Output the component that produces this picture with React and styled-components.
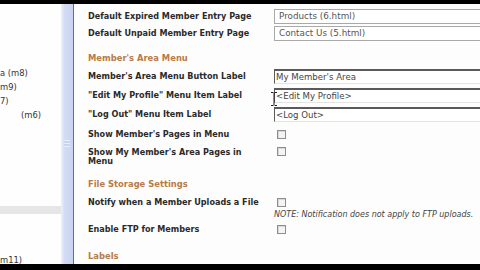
import styled, { createGlobalStyle } from 'styled-components';

const GlobalStyle = createGlobalStyle`
  html, body {
    margin: 0;
    padding: 0;
    background: #000;
    overflow: hidden;
  }
  body {
    font-family: "DejaVu Sans", Verdana, sans-serif;
  }
`;

const sideItems = [
  { text: 'a (m8)', top: 65, indent: 0 },
  { text: 'm9)', top: 6, indent: 0 },
  { text: '7)', top: 6, indent: 0 },
  { text: '(m6)', top: 6, indent: 21 },
];

const App = () => {
  return (
    <Screen>
      <GlobalStyle />
      <Window>
        <Sidebar>
          {sideItems.map((item) => (
            <SideItem key={item.text} $mt={item.top} $indent={item.indent}>
              {item.text}
            </SideItem>
          ))}
          <SideSelected />
          <SideItem $mt={42} $indent={0}>m11)</SideItem>
        </Sidebar>
        <Scrollbar>
          <Grip />
        </Scrollbar>
        <Main>
          <Row $h={17} $mt={4}>
            <Label>Default Expired Member Entry Page</Label>
            <Select>Products (6.html)</Select>
          </Row>
          <Row $h={17} $mt={0}>
            <Label>Default Unpaid Member Entry Page</Label>
            <Select>Contact Us (5.html)</Select>
          </Row>

          <Heading $mt={9}>Member's Area Menu</Heading>
          <Row $h={19} $mt={2}>
            <Label>Member's Area Menu Button Label</Label>
            <TextInput>My Member's Area</TextInput>
          </Row>
          <Row $h={19} $mt={0}>
            <Label>"Edit My Profile" Menu Item Label</Label>
            <TextInput>
              &lt;Edit My Profile&gt;
              <IBeam viewBox="0 0 6 14" width="6" height="14">
                <path d="M0 0.5h2.5M3.5 0.5h2.5M3 1v12M0 13.5h2.5M3.5 13.5h2.5" stroke="#222" strokeWidth="1" fill="none" />
              </IBeam>
            </TextInput>
          </Row>
          <Row $h={19} $mt={0}>
            <Label>"Log Out" Menu Item Label</Label>
            <TextInput>&lt;Log Out&gt;</TextInput>
          </Row>
          <Row $h={19} $mt={1}>
            <Label>Show Member's Pages in Menu</Label>
            <Field>
              <Check />
            </Field>
          </Row>
          <TopRow $h={24} $mt={3}>
            <Label $pt={1}>
              Show My Member's Area Pages in
              <br />
              Menu
            </Label>
            <Field>
              <Check />
            </Field>
          </TopRow>

          <Heading $mt={6}>File Storage Settings</Heading>
          <TopRow $h={22} $mt={7}>
            <Label $pt={0}>Notify when a Member Uploads a File</Label>
            <Field>
              <Check />
              <Note>NOTE: Notification does not apply to FTP uploads.</Note>
            </Field>
          </TopRow>
          <Row $h={17} $mt={1}>
            <Label>Enable FTP for Members</Label>
            <Field>
              <Check />
            </Field>
          </Row>

          <Heading $mt={11}>Labels</Heading>
        </Main>
      </Window>
    </Screen>
  );
};

const Screen = styled.div`
  width: 480px;
  height: 270px;
  background: #000;
  padding-top: 4px;
  box-sizing: border-box;
`;

const Window = styled.div`
  height: 260px;
  background: #fdfdfd;
  display: flex;
  overflow: hidden;
`;

const Sidebar = styled.div`
  width: 61px;
  flex-shrink: 0;
  background: #fefefe;
  overflow: hidden;
  display: flex;
  flex-direction: column;
  font-size: 8.4px;
  color: #333;
  white-space: nowrap;
`;

const SideItem = styled.div`
  height: 8px;
  line-height: 8px;
  margin-top: ${(p) => p.$mt}px;
  padding-left: ${(p) => p.$indent}px;
`;

const SideSelected = styled.div`
  margin-top: 87px;
  height: 10px;
  background: #e6e6e6;
`;

const Scrollbar = styled.div`
  width: 12px;
  flex-shrink: 0;
  background: linear-gradient(to right, #eef1fa 0%, #d3dcf4 30%, #c9d4f2 100%);
  border-right: 1px solid #6f6f6f;
`;

const Grip = styled.div`
  margin: 136px auto 0;
  width: 6px;
  height: 5px;
  border-top: 1px solid #e8eefc;
  border-bottom: 1px solid #e8eefc;
  background: linear-gradient(#c9d4f2 0 2px, #e8eefc 2px 3px, #c9d4f2 3px);
`;

const Main = styled.div`
  flex: 1;
  padding-left: 14px;
  display: flex;
  flex-direction: column;
  min-width: 0;
`;

const Row = styled.div`
  display: grid;
  grid-template-columns: 186px 1fr;
  align-items: center;
  height: ${(p) => p.$h}px;
  margin-top: ${(p) => p.$mt}px;
`;

const TopRow = styled(Row)`
  align-items: start;
`;

const Label = styled.div`
  font-size: 8.1px;
  font-weight: bold;
  color: #2a2a2a;
  line-height: 9px;
  white-space: nowrap;
  padding-top: ${(p) => p.$pt || 0}px;
`;

const Heading = styled.div`
  font-size: 8.4px;
  font-weight: bold;
  color: #b97a45;
  height: 14px;
  line-height: 14px;
  margin-top: ${(p) => p.$mt}px;
`;

const Select = styled.div`
  width: 240px;
  height: 15px;
  box-sizing: border-box;
  border: 1px solid #a9a9a9;
  border-right: none;
  padding-left: 4px;
  font-size: 8.8px;
  line-height: 13px;
  color: #555;
  background: #fff;
  white-space: nowrap;
`;

const TextInput = styled.div`
  position: relative;
  width: 240px;
  height: 15px;
  box-sizing: border-box;
  border-top: 2px solid #5a5a5a;
  border-left: 1px solid #5a5a5a;
  border-bottom: 1px solid #e4e4e4;
  padding-left: 1px;
  font-size: 8.6px;
  line-height: 12px;
  color: #444;
  background: #fff;
  white-space: nowrap;
`;

const IBeam = styled.svg`
  position: absolute;
  left: -4px;
  top: 2px;
`;

const Field = styled.div`
  display: flex;
  flex-direction: column;
  align-items: flex-start;
`;

const Check = styled.div`
  width: 9px;
  height: 9px;
  box-sizing: border-box;
  margin-left: 3px;
  border: 1px solid #8e8e8e;
  background: #f4f4f4;
  box-shadow: inset 1px 1px 0 #d6d6d6;
`;

const Note = styled.div`
  margin-top: 3px;
  font-size: 8px;
  font-style: italic;
  color: #444;
  white-space: nowrap;
`;

export default App;
